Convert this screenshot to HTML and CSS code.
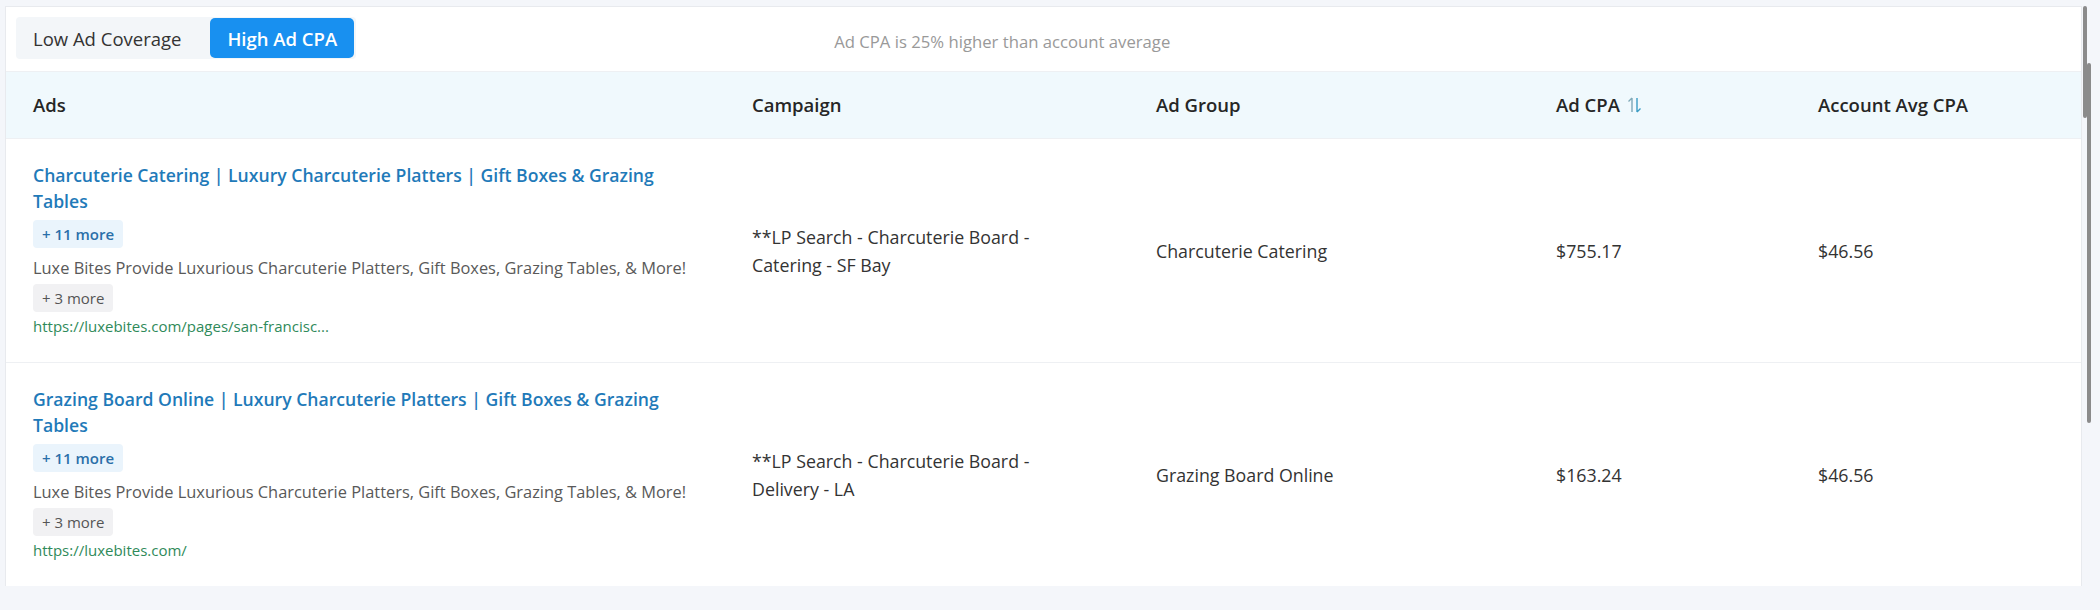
FILE: index.html
```html
<!DOCTYPE html>
<html lang="en">
<head>
    <meta charset="UTF-8">
    <meta name="viewport" content="width=device-width, initial-scale=1.0">
    <title>Ad Issues</title>
    <link rel="stylesheet" href="styles.css">
</head>
<body>
    <div class="panel">
        <div class="toolbar">
            <div class="tabs">
                <button class="tab">Low Ad Coverage</button>
                <button class="tab active">High Ad CPA</button>
            </div>
            <span class="hint">Ad CPA is 25% higher than account average</span>
        </div>

        <div class="table">
            <div class="row head">
                <div class="cell">Ads</div>
                <div class="cell">Campaign</div>
                <div class="cell">Ad Group</div>
                <div class="cell">Ad CPA
                    <svg class="sort" width="18" height="18" viewBox="0 0 18 18">
                        <path d="M6 16V2M2.5 5.5L6 2" fill="none" stroke="#7fa9b8" stroke-width="1.4"/>
                        <path d="M11 2v14M11 16l3.5-3.5" fill="none" stroke="#3a9cc4" stroke-width="1.4"/>
                    </svg>
                </div>
                <div class="cell">Account Avg CPA</div>
            </div>

            <div class="row">
                <div class="cell ad">
                    <a class="ad-title" href="#">Charcuterie Catering | Luxury Charcuterie Platters | Gift Boxes &amp; Grazing Tables</a>
                    <span class="chip blue">+ 11 more</span>
                    <div class="ad-desc">Luxe Bites Provide Luxurious Charcuterie Platters, Gift Boxes, Grazing Tables, &amp; More!</div>
                    <span class="chip grey">+ 3 more</span>
                    <div class="ad-url">https://luxebites.com/pages/san-francisc...</div>
                </div>
                <div class="cell"><span class="campaign">**LP Search - Charcuterie Board - Catering - SF Bay</span></div>
                <div class="cell">Charcuterie Catering</div>
                <div class="cell">$755.17</div>
                <div class="cell">$46.56</div>
            </div>

            <div class="row">
                <div class="cell ad">
                    <a class="ad-title" href="#">Grazing Board Online | Luxury Charcuterie Platters | Gift Boxes &amp; Grazing Tables</a>
                    <span class="chip blue">+ 11 more</span>
                    <div class="ad-desc">Luxe Bites Provide Luxurious Charcuterie Platters, Gift Boxes, Grazing Tables, &amp; More!</div>
                    <span class="chip grey">+ 3 more</span>
                    <div class="ad-url">https://luxebites.com/</div>
                </div>
                <div class="cell"><span class="campaign">**LP Search - Charcuterie Board - Delivery - LA</span></div>
                <div class="cell">Grazing Board Online</div>
                <div class="cell">$163.24</div>
                <div class="cell">$46.56</div>
            </div>
        </div>

        <div class="scroll-thumb outer"></div>
        <div class="scroll-thumb inner"></div>
    </div>
</body>
</html>
```

FILE: styles.css
```css
body {
    margin: 0;
    background-color: #f4f6fa;
    font-family: "Open Sans", "Noto Sans", sans-serif;
    color: #333;
}
.panel {
    position: relative;
    width: 2075px;
    margin: 6px 0 0 5px;
    background-color: white;
    border-top: 1px solid #e8eaee;
    border-left: 1px solid #e8eaee;
    border-right: 1px solid #e8eaee;
}
.toolbar {
    display: flex;
    align-items: center;
    padding: 10px 0 12px 10px;
}
.tabs {
    display: flex;
    background-color: #f3f6f9;
    border-radius: 4px;
    padding: 1px 2px 1px 0;
}
.tab {
    font-family: inherit;
    font-size: 18.5px;
    color: #333;
    background: none;
    border: none;
    border-radius: 5px;
    padding: 0 17px;
    height: 40px;
    cursor: pointer;
}
.tab.active {
    background-color: #1890f0;
    color: white;
    font-weight: 600;
    margin-left: 12px;
}
.hint {
    margin-left: 478px;
    margin-top: 6px;
    font-size: 16.7px;
    color: #999;
}
.row {
    display: grid;
    grid-template-columns: 719px 404px 400px 262px 1fr;
    align-items: center;
    border-top: 1px solid #eef0f3;
}
.row .cell {
    padding: 0 27px;
    font-size: 17.8px;
    line-height: 26px;
}
.row.head {
    height: 66px;
    background-color: #f0f9fd;
}
.row.head .cell {
    font-size: 18.5px;
    font-weight: 600;
    color: #262626;
    display: flex;
    align-items: center;
}
.sort {
    margin-left: 6px;
}
.cell.ad {
    padding-top: 23px;
    padding-bottom: 23px;
    display: flex;
    flex-direction: column;
    align-items: flex-start;
}
.ad-title {
    max-width: 660px;
    font-size: 17.6px;
    font-weight: 600;
    color: #1f7ab9;
    text-decoration: none;
}
.chip {
    font-size: 15px;
    line-height: 28px;
    padding: 0 9px;
    border-radius: 4px;
}
.chip.blue {
    background-color: #eaf4fc;
    color: #2a6fa9;
    font-weight: 600;
    margin: 6px 0 7px;
}
.chip.grey {
    background-color: #f1f1f3;
    color: #555;
    margin: 3px 0 1px;
}
.ad-desc {
    font-size: 16.4px;
    color: #595959;
}
.ad-url {
    font-size: 15px;
    color: #2f8a5a;
}
.campaign {
    display: block;
    max-width: 320px;
    line-height: 28px;
}
.scroll-thumb {
    position: absolute;
    width: 4px;
    background-color: #8b8b8b;
    border-radius: 2px;
}
.scroll-thumb.outer {
    right: -6px;
    top: -1px;
    height: 112px;
}
.scroll-thumb.inner {
    right: -10px;
    top: 56px;
    height: 360px;
}
```
